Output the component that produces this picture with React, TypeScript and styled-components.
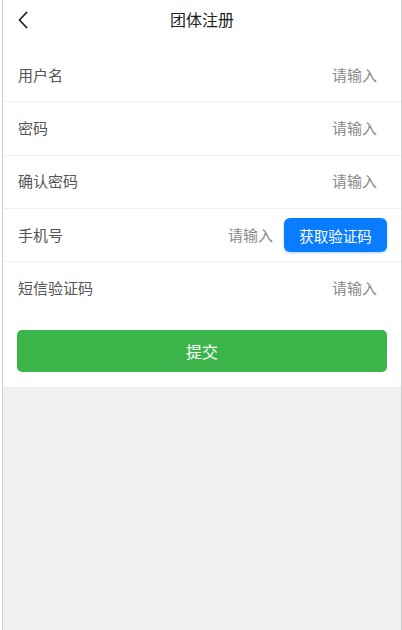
import * as React from 'react';
import styled, { createGlobalStyle } from 'styled-components';

const GlobalStyle = createGlobalStyle`
  html, body {
    margin: 0;
    padding: 0;
    background: #ffffff;
  }
  body {
    font-family: "Noto Sans CJK SC", "Noto Sans", sans-serif;
  }
`;

interface Field {
  label: string;
  type?: string;
  withCode?: boolean;
}

const fields: Field[] = [
  { label: '用户名' },
  { label: '密码', type: 'password' },
  { label: '确认密码', type: 'password' },
  { label: '手机号', withCode: true },
  { label: '短信验证码' },
];

export default function App() {
  return (
    <>
      <GlobalStyle />
      <S.Frame>
        <S.Header>
          <S.Back aria-label="back">
            <svg width="12" height="18" viewBox="0 0 12 18" fill="none">
              <path
                d="M9.5 1.5L2.5 9l7 7.5"
                stroke="#222"
                strokeWidth="1.8"
                strokeLinecap="round"
                strokeLinejoin="round"
              />
            </svg>
          </S.Back>
          <S.Title>团体注册</S.Title>
        </S.Header>
        <S.Form>
          {fields.map((f, i) => (
            <S.Row key={f.label} $last={i === fields.length - 1}>
              <S.Label>{f.label}</S.Label>
              <S.Input type={f.type || 'text'} placeholder="请输入" $flush={f.withCode} />
              {f.withCode && <S.CodeButton type="button">获取验证码</S.CodeButton>}
            </S.Row>
          ))}
          <S.Submit type="button">提交</S.Submit>
        </S.Form>
        <S.Rest />
      </S.Frame>
    </>
  );
}

const S = {
  Frame: styled.div`
    box-sizing: border-box;
    margin-left: 2px;
    width: 400px;
    height: 630px;
    border-left: 1px solid #cfcfcf;
    border-right: 1px solid #cfcfcf;
    display: flex;
    flex-direction: column;
    background: #f0f0f0;
  `,
  Header: styled.div`
    position: relative;
    height: 49px;
    display: flex;
    align-items: flex-start;
    justify-content: center;
    background: #fff;
  `,
  Back: styled.button`
    position: absolute;
    left: 13px;
    top: 10px;
    border: 0;
    background: none;
    padding: 0;
    width: 14px;
    height: 20px;
    display: flex;
    align-items: center;
    justify-content: center;
  `,
  Title: styled.div`
    margin-top: 7px;
    font-size: 16px;
    line-height: 24px;
    color: #1e1e1e;
  `,
  Form: styled.div`
    background: #fff;
    display: flex;
    flex-direction: column;
    padding-bottom: 15px;
  `,
  Row: styled.div<{ $last?: boolean }>`
    height: 53.33px;
    box-sizing: border-box;
    padding: 0 14px 0 15px;
    display: flex;
    align-items: center;
    gap: 11px;
    border-bottom: ${(p) => (p.$last ? '0' : '1px solid #f0f0f0')};
  `,
  Label: styled.div`
    font-size: 15px;
    color: #555;
    white-space: nowrap;
    margin-top: -2px;
  `,
  Input: styled.input<{ $flush?: boolean }>`
    flex: 1;
    min-width: 0;
    border: 0;
    outline: none;
    background: transparent;
    text-align: right;
    padding: 0 ${(p) => (p.$flush ? '0' : '10px')} 0 0;
    margin-top: -2px;
    font-family: inherit;
    font-size: 15px;
    color: #333;
    &::placeholder {
      color: #8a8a8a;
    }
  `,
  CodeButton: styled.button`
    flex: none;
    width: 103px;
    height: 34px;
    border: 0;
    border-radius: 6px;
    background: #0a7cff;
    color: #fff;
    font-family: inherit;
    font-size: 14.5px;
    box-shadow: 0 1px 3px rgba(10, 124, 255, 0.35);
  `,
  Submit: styled.button`
    margin: 14px 14px 0 14px;
    height: 42px;
    border: 0;
    border-radius: 5px;
    background: #3bb54a;
    color: #fff;
    font-family: inherit;
    font-size: 16px;
  `,
  Rest: styled.div`
    flex: 1;
    background: #f0f0f0;
  `,
};
